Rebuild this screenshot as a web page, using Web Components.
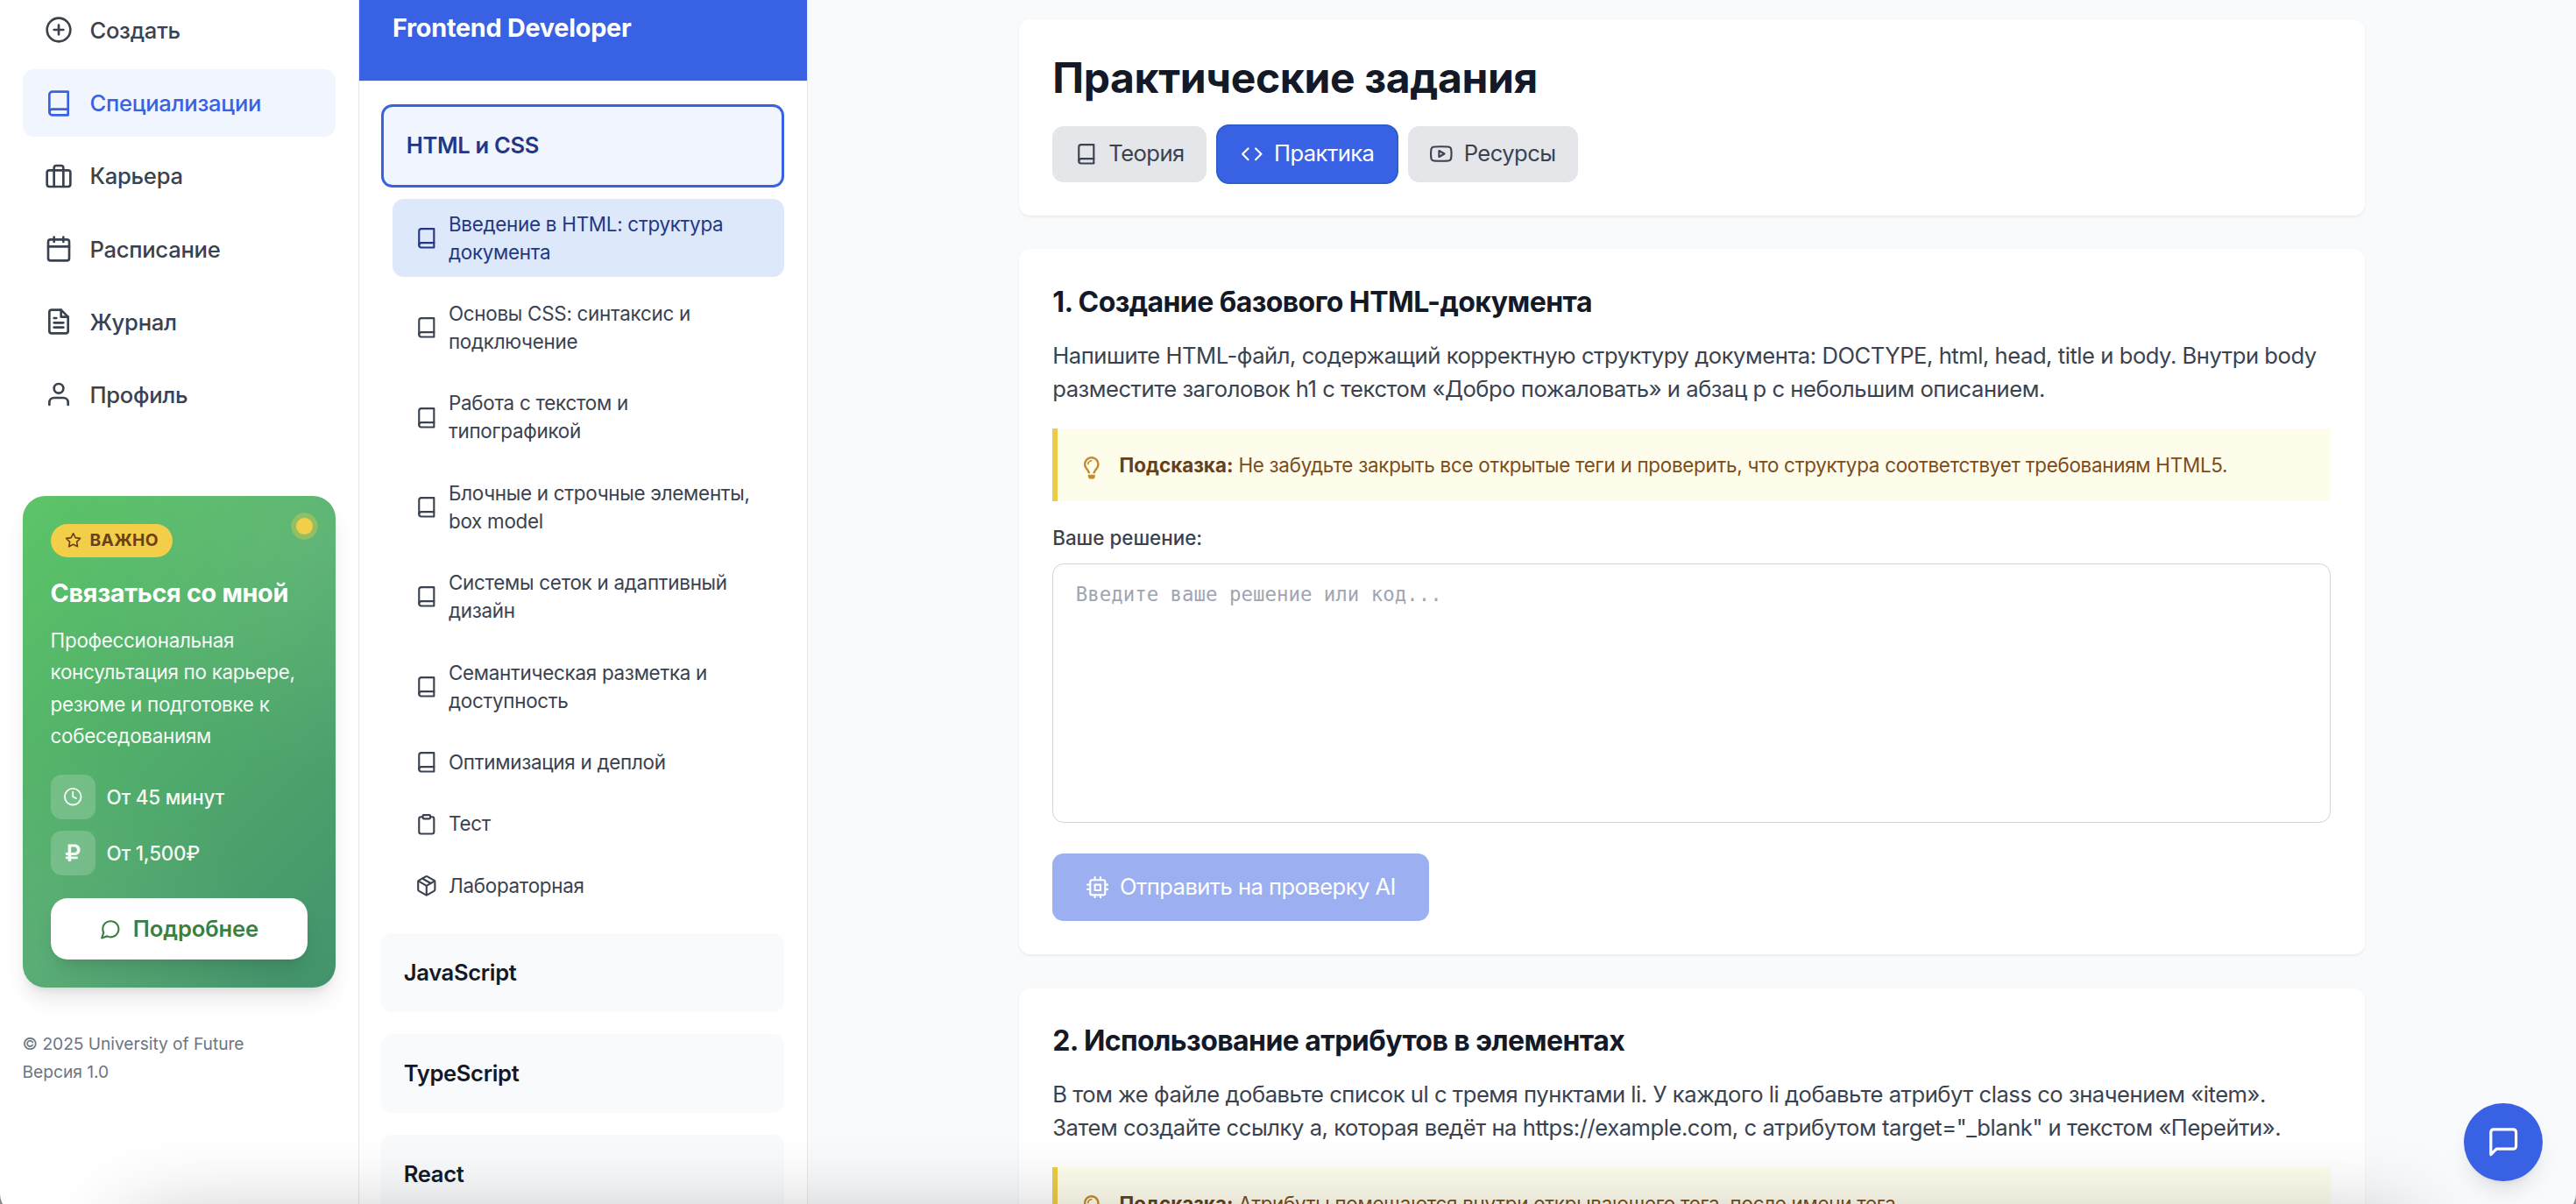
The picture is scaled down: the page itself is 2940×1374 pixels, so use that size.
<!DOCTYPE html>
<html lang="ru">
<head>
<meta charset="UTF-8">
<title>University of Future</title>
<style>
  html {
    font-size: 25.6px;
  }
  body {
    margin: 0;
    height: 100vh;
    overflow: hidden;
    display: flex;
    background: #f9fafc;
    font-family: Inter, "Liberation Sans", sans-serif;
    line-height: 1.5;
    color: #3a4250;
    --blue: #3862e3;
    --blue-soft: #f0f5fe;
    --navy: #243782;
    --ink: #131927;
    --text: #3a4250;
    --muted: #6d7482;
    --line: #e5e7eb;
  }
</style>
</head>
<body>
  <side-nav>
    <nav-link icon="plus-circle">Создать</nav-link>
    <nav-link icon="book" active>Специализации</nav-link>
    <nav-link icon="briefcase">Карьера</nav-link>
    <nav-link icon="calendar">Расписание</nav-link>
    <nav-link icon="file-text">Журнал</nav-link>
    <nav-link icon="user">Профиль</nav-link>
    <promo-card slot="promo"></promo-card>
    <span slot="footer">© 2025 University of Future</span>
    <span slot="footer">Версия 1.0</span>
  </side-nav>

  <course-panel heading="Frontend Developer">
    <course-chapter heading="HTML и CSS" open>
      <course-lesson icon="book" active>Введение в HTML: структура документа</course-lesson>
      <course-lesson icon="book">Основы CSS: синтаксис и подключение</course-lesson>
      <course-lesson icon="book">Работа с текстом и типографикой</course-lesson>
      <course-lesson icon="book">Блочные и строчные элементы, box model</course-lesson>
      <course-lesson icon="book">Системы сеток и адаптивный дизайн</course-lesson>
      <course-lesson icon="book">Семантическая разметка и доступность</course-lesson>
      <course-lesson icon="book">Оптимизация и деплой</course-lesson>
      <course-lesson icon="clipboard">Тест</course-lesson>
      <course-lesson icon="package">Лабораторная</course-lesson>
    </course-chapter>
    <course-chapter heading="JavaScript"></course-chapter>
    <course-chapter heading="TypeScript"></course-chapter>
    <course-chapter heading="React"></course-chapter>
  </course-panel>

  <practice-page heading="Практические задания">
    <page-tab slot="tabs" icon="book">Теория</page-tab>
    <page-tab slot="tabs" icon="code" active>Практика</page-tab>
    <page-tab slot="tabs" icon="youtube">Ресурсы</page-tab>

    <practice-task heading="1. Создание базового HTML-документа">
      Напишите HTML-файл, содержащий корректную структуру документа: DOCTYPE, html, head, title и body. Внутри body разместите заголовок h1 с текстом «Добро пожаловать» и абзац p с небольшим описанием.
      <span slot="hint">Не забудьте закрыть все открытые теги и проверить, что структура соответствует требованиям HTML5.</span>
    </practice-task>
    <practice-task heading="2. Использование атрибутов в элементах">
      В том же файле добавьте список ul с тремя пунктами li. У каждого li добавьте атрибут class со значением «item». Затем создайте ссылку a, которая ведёт на https://example.com, с атрибутом target="_blank" и текстом «Перейти».
      <span slot="hint">Атрибуты помещаются внутри открывающего тега, после имени тега.</span>
    </practice-task>
  </practice-page>

  <chat-button></chat-button>
  <window-edge></window-edge>

<script>
const ICONS = {
  "plus-circle": `<circle cx="12" cy="12" r="10"/><path d="M12 8v8M8 12h8"/>`,
  book: `<path d="M4 19.5A2.5 2.5 0 0 1 6.5 17H20"/><path d="M6.5 2H20v20H6.5A2.5 2.5 0 0 1 4 19.5v-15A2.5 2.5 0 0 1 6.5 2z"/>`,
  briefcase: `<rect x="2" y="7" width="20" height="14" rx="2"/><path d="M16 21V5a2 2 0 0 0-2-2h-4a2 2 0 0 0-2 2v16"/>`,
  calendar: `<rect x="3" y="4" width="18" height="18" rx="2"/><path d="M16 2v4M8 2v4M3 10h18"/>`,
  "file-text": `<path d="M14 2H6a2 2 0 0 0-2 2v16a2 2 0 0 0 2 2h12a2 2 0 0 0 2-2V8z"/><path d="M14 2v6h6M16 13H8M16 17H8M10 9H8"/>`,
  user: `<path d="M20 21v-2a4 4 0 0 0-4-4H8a4 4 0 0 0-4 4v2"/><circle cx="12" cy="7" r="4"/>`,
  star: `<path d="M12 2l3.09 6.26L22 9.27l-5 4.87 1.18 6.88L12 17.77l-6.18 3.25L7 14.14 2 9.27l6.91-1.01z"/>`,
  clock: `<circle cx="12" cy="12" r="10"/><path d="M12 6v6l4 2"/>`,
  "message-circle": `<path d="M21 11.5a8.38 8.38 0 0 1-.9 3.8 8.5 8.5 0 0 1-7.6 4.7 8.38 8.38 0 0 1-3.8-.9L3 21l1.9-5.7a8.38 8.38 0 0 1-.9-3.8 8.5 8.5 0 0 1 4.7-7.6 8.38 8.38 0 0 1 3.8-.9h.5a8.48 8.48 0 0 1 8 8z"/>`,
  "message-square": `<path d="M21 15a2 2 0 0 1-2 2H7l-4 4V5a2 2 0 0 1 2-2h14a2 2 0 0 1 2 2z"/>`,
  clipboard: `<path d="M16 4h2a2 2 0 0 1 2 2v14a2 2 0 0 1-2 2H6a2 2 0 0 1-2-2V6a2 2 0 0 1 2-2h2"/><rect x="8" y="2" width="8" height="4" rx="1"/>`,
  package: `<path d="M16.5 9.4l-9-5.19M21 16V8a2 2 0 0 0-1-1.73l-7-4a2 2 0 0 0-2 0l-7 4A2 2 0 0 0 3 8v8a2 2 0 0 0 1 1.73l7 4a2 2 0 0 0 2 0l7-4A2 2 0 0 0 21 16z"/><path d="M3.27 6.96L12 12.01l8.73-5.05M12 22.08V12"/>`,
  code: `<path d="M16 18l6-6-6-6M8 6l-6 6 6 6"/>`,
  youtube: `<path d="M22.54 6.42a2.78 2.78 0 0 0-1.94-2C18.88 4 12 4 12 4s-6.88 0-8.6.46a2.78 2.78 0 0 0-1.94 2A29 29 0 0 0 1 11.75a29 29 0 0 0 .46 5.33A2.78 2.78 0 0 0 3.4 19c1.72.46 8.6.46 8.6.46s6.88 0 8.6-.46a2.78 2.78 0 0 0 1.94-2 29 29 0 0 0 .46-5.25 29 29 0 0 0-.46-5.33z"/><path d="M9.75 15.02l5.75-3.27-5.75-3.27z"/>`,
  cpu: `<rect x="4" y="4" width="16" height="16" rx="2"/><path d="M9 9h6v6H9zM9 1v3M15 1v3M9 20v3M15 20v3M20 9h3M20 14h3M1 9h3M1 14h3"/>`,
};

// Filled icons keep their own viewBox
const SOLID_ICONS = {
  lightbulb: {
    box: "0 0 352 512",
    path: "M176 80c-52.94 0-96 43.06-96 96 0 8.84 7.16 16 16 16s16-7.16 16-16c0-35.3 28.72-64 64-64 8.84 0 16-7.16 16-16s-7.16-16-16-16zM96.06 459.17c0 3.15.93 6.22 2.68 8.84l24.51 36.84c2.97 4.46 7.97 7.14 13.32 7.14h78.85c5.36 0 10.36-2.68 13.32-7.14l24.51-36.84c1.74-2.62 2.67-5.7 2.68-8.84l.05-43.18H96.02l.04 43.18zM176 0C73.72 0 0 82.97 0 176c0 44.37 16.45 84.85 43.56 115.78 16.64 18.99 42.74 58.8 52.42 92.16v.06h48v-.12c-.01-4.77-.72-9.51-2.15-14.07-5.59-17.81-22.82-64.86-62.17-109.76-20.53-23.43-31.52-53.15-31.61-84.14-.2-73.64 59.67-128 127.95-128 70.58 0 128 57.42 128 128 0 30.97-11.24 60.85-31.65 84.14-39.11 44.61-56.42 91.47-62.1 109.46a47.507 47.507 0 0 0-2.22 14.3v.1h48v-.05c9.68-33.37 35.78-73.18 52.42-92.16C335.55 260.85 352 220.37 352 176 352 78.8 273.2 0 176 0z",
  },
  ruble: {
    box: "0 0 384 512",
    path: "M239.36 320C324.48 320 384 260.542 384 175.071S324.48 32 239.36 32H76c-6.627 0-12 5.373-12 12v206.632H12c-6.627 0-12 5.373-12 12V308c0 6.627 5.373 12 12 12h52v32H12c-6.627 0-12 5.373-12 12v40c0 6.627 5.373 12 12 12h52v52c0 6.627 5.373 12 12 12h58.56c6.627 0 12-5.373 12-12v-52H308c6.627 0 12-5.373 12-12v-40c0-6.627-5.373-12-12-12H146.56v-32h92.8zm-92.8-219.252h78.72c46.72 0 74.88 29.11 74.88 74.323 0 45.832-28.16 75.561-76.16 75.561h-77.44V100.748z",
  },
};

class BaseElement extends HTMLElement {
  constructor() {
    super();
    this.attachShadow({ mode: "open" });
  }

  connectedCallback() {
    this.shadowRoot.innerHTML = this.render();
  }
}

class UiIcon extends BaseElement {
  render() {
    const name = this.getAttribute("name");
    const solid = SOLID_ICONS[name];
    return `
      <style>
        :host { display: block; flex: none; width: 1rem; height: 1rem; }
        svg { display: block; width: 100%; height: 100%; }
      </style>
      ${
        solid
          ? `<svg viewBox="${solid.box}" fill="currentColor"><path d="${solid.path}"/></svg>`
          : `<svg viewBox="0 0 24 24" fill="none" stroke="currentColor" stroke-width="2" stroke-linecap="round" stroke-linejoin="round">${ICONS[name]}</svg>`
      }
    `;
  }
}

class SideNav extends BaseElement {
  render() {
    return `
      <style>
        :host {
          flex: none;
          box-sizing: border-box;
          width: 16rem;
          height: 100vh;
          overflow: hidden;
          padding: 0 1rem;
          border-right: 1px solid var(--line);
          background: #fff;
        }
        :host, nav, footer { display: flex; flex-direction: column; }
        /* the list is scrolled by a few pixels */
        nav { gap: 0.25rem; margin-top: -4px; }
        .promo { margin-top: 3rem; }
        footer {
          gap: 0.25rem;
          margin-top: 52px;
          font-size: 0.75rem;
          line-height: 1rem;
          letter-spacing: -0.002em;
          color: var(--muted);
        }
      </style>
      <nav><slot></slot></nav>
      <div class="promo"><slot name="promo"></slot></div>
      <footer><slot name="footer"></slot></footer>
    `;
  }
}

class NavLink extends BaseElement {
  render() {
    return `
      <style>
        :host {
          display: flex;
          align-items: center;
          gap: 0.75rem;
          height: 3rem;
          padding: 0 1rem;
          border-radius: 0.5rem;
          font-weight: 500;
          letter-spacing: -0.01em;
          white-space: nowrap;
        }
        :host([active]) { background: var(--blue-soft); color: var(--blue); }
        ui-icon { width: 1.25rem; height: 1.25rem; }
        span { padding-top: 1.5px; }
      </style>
      <ui-icon name="${this.getAttribute("icon")}"></ui-icon>
      <span><slot></slot></span>
    `;
  }
}

class PromoCard extends BaseElement {
  render() {
    return `
      <style>
        :host {
          display: flex;
          flex-direction: column;
          position: relative;
          padding: 1.25rem;
          border-radius: 1rem;
          color: #fff;
          background:
            radial-gradient(circle at 92% 8%, rgba(255, 255, 255, 0.08), transparent 45%),
            radial-gradient(circle at 8% 96%, rgba(255, 255, 255, 0.08), transparent 40%),
            linear-gradient(135deg, #5dc568, #43926d);
          box-shadow: 0 0.625rem 0.9375rem -0.1875rem rgba(0, 0, 0, 0.1), 0 0.25rem 0.375rem -0.25rem rgba(0, 0, 0, 0.1);
        }
        .dot {
          position: absolute;
          top: 1rem;
          right: 1rem;
          width: 0.75rem;
          height: 0.75rem;
          border-radius: 50%;
          background: #f2ce49;
          box-shadow: 0 0 0 0.22rem rgba(242, 206, 73, 0.35);
        }
        .badge {
          align-self: flex-start;
          display: flex;
          align-items: center;
          gap: 0.375rem;
          padding: 0.25rem 0.625rem;
          border-radius: 1rem;
          background: #f2ce49;
          color: #6a4119;
          font-size: 0.75rem;
          line-height: 1rem;
          font-weight: 700;
          letter-spacing: 0.02em;
        }
        .badge ui-icon { width: 0.75rem; height: 0.75rem; }
        h3 {
          margin: 0.75rem 0 0.5rem;
          font-size: 1.125rem;
          line-height: 1.75rem;
          font-weight: 700;
          letter-spacing: -0.011em;
          white-space: nowrap;
        }
        p {
          margin: 0 0 1rem;
          font-size: 0.875rem;
          line-height: 1.625;
          letter-spacing: -0.012em;
          opacity: 0.95;
        }
        .facts {
          display: flex;
          flex-direction: column;
          gap: 0.5rem;
          font-size: 0.875rem;
        }
        .fact { display: flex; align-items: center; gap: 0.5rem; opacity: 0.95; font-weight: 500; letter-spacing: -0.01em; }
        .tile {
          display: flex;
          align-items: center;
          justify-content: center;
          width: 2rem;
          height: 2rem;
          border-radius: 0.5rem;
          background: rgba(255, 255, 255, 0.2);
        }
        .tile ui-icon { width: 0.875rem; height: 0.875rem; }
        button {
          display: flex;
          align-items: center;
          justify-content: center;
          gap: 0.5rem;
          height: 2.75rem;
          margin-top: 1rem;
          padding: 1.5px 0 0;
          border: 0;
          border-radius: 0.75rem;
          background: #fff;
          color: #3a8042;
          font: inherit;
          font-weight: 600;
          letter-spacing: -0.005em;
          box-shadow: 0 0.625rem 0.9375rem -0.1875rem rgba(0, 0, 0, 0.1), 0 0.25rem 0.375rem -0.25rem rgba(0, 0, 0, 0.1);
        }
      </style>
      <div class="dot"></div>
      <div class="badge"><ui-icon name="star"></ui-icon>ВАЖНО</div>
      <h3>Связаться со мной</h3>
      <p>Профессиональная консультация по карьере, резюме и подготовке к собеседованиям</p>
      <div class="facts">
        <div class="fact"><div class="tile"><ui-icon name="clock"></ui-icon></div>От 45 минут</div>
        <div class="fact"><div class="tile"><ui-icon name="ruble"></ui-icon></div>От 1,500₽</div>
      </div>
      <button><ui-icon name="message-circle"></ui-icon>Подробнее</button>
    `;
  }
}

class CoursePanel extends BaseElement {
  render() {
    return `
      <style>
        :host {
          display: flex;
          flex-direction: column;
          flex: none;
          box-sizing: border-box;
          width: 20rem;
          height: 100vh;
          overflow: hidden;
          border-right: 1px solid var(--line);
          background: #fff;
        }
        header {
          flex: none;
          padding: 10px 1.5rem 37.6px;
          border-bottom: 1px solid var(--line);
          background: var(--blue);
          background-clip: padding-box;
          color: #fff;
        }
        h2 {
          margin: 0;
          font-size: 1.125rem;
          line-height: 1.75rem;
          font-weight: 700;
          letter-spacing: -0.009em;
        }
        .chapters {
          display: flex;
          flex-direction: column;
          gap: 1rem;
          padding: 1rem;
        }
      </style>
      <header><h2>${this.getAttribute("heading")}</h2></header>
      <div class="chapters"><slot></slot></div>
    `;
  }
}

class CourseChapter extends BaseElement {
  render() {
    return `
      <style>
        :host { display: block; flex: none; }
        .head {
          display: flex;
          align-items: center;
          height: 3.5rem;
          padding: 0 1rem;
          border-radius: 0.5rem;
          background: #f9fafc;
          color: var(--ink);
          font-weight: 600;
          letter-spacing: -0.014em;
        }
        :host([open]) .head {
          height: 89px;
          border: 3px solid var(--blue);
          background: var(--blue-soft);
          color: var(--navy);
        }
        .lessons { display: none; }
        :host([open]) .lessons {
          display: flex;
          flex-direction: column;
          gap: 0.5rem;
          margin: 0.5rem 0 0 0.5rem;
        }
      </style>
      <div class="head">${this.getAttribute("heading")}</div>
      <div class="lessons"><slot></slot></div>
    `;
  }
}

class CourseLesson extends BaseElement {
  render() {
    return `
      <style>
        :host {
          display: flex;
          align-items: center;
          gap: 0.5rem;
          padding: 0.5rem 1rem;
          border-radius: 0.5rem;
          font-size: 0.875rem;
          line-height: 1.25rem;
          letter-spacing: -0.012em;
        }
        :host([active]) { background: #dde8fb; color: var(--navy); }
      </style>
      <ui-icon name="${this.getAttribute("icon")}"></ui-icon>
      <span><slot></slot></span>
    `;
  }
}

class PracticePage extends BaseElement {
  render() {
    return `
      <style>
        :host {
          display: flex;
          flex: 1;
          justify-content: center;
          height: 100vh;
          overflow: hidden;
        }
        .column {
          display: flex;
          flex-direction: column;
          gap: 1.5rem;
          width: 60rem;
          padding-top: 22px;
        }
        header {
          padding: 1.5rem;
          border-radius: 0.5rem;
          background: #fff;
          box-shadow: 0 1.6px 3.2px rgba(0, 0, 0, 0.06);
        }
        h1 {
          margin: 0 0 1rem;
          color: var(--ink);
          font-size: 1.875rem;
          line-height: 2.25rem;
          font-weight: 700;
          letter-spacing: -0.0075em;
        }
        .tabs { display: flex; gap: 0.5rem; }
      </style>
      <div class="column">
        <header>
          <h1>${this.getAttribute("heading")}</h1>
          <div class="tabs"><slot name="tabs"></slot></div>
        </header>
        <slot></slot>
      </div>
    `;
  }
}

class PageTab extends BaseElement {
  render() {
    return `
      <style>
        :host {
          display: flex;
          align-items: center;
          gap: 0.5rem;
          padding: 0.5rem 1rem;
          border-radius: 0.5rem;
          background: #e5e6ea;
          letter-spacing: -0.022em;
        }
        :host([active]) {
          background: var(--blue);
          color: #fff;
          box-shadow: 0 0 0 2px #2c5fcc;
        }
      </style>
      <ui-icon name="${this.getAttribute("icon")}"></ui-icon>
      <span><slot></slot></span>
    `;
  }
}

class PracticeTask extends BaseElement {
  render() {
    return `
      <style>
        :host {
          display: block;
          padding: 1.5rem;
          border-radius: 0.5rem;
          background: #fff;
          box-shadow: 0 1.6px 3.2px rgba(0, 0, 0, 0.06);
        }
        h3 {
          margin: 0 0 0.75rem;
          color: var(--ink);
          font-size: 1.25rem;
          line-height: 1.75rem;
          font-weight: 700;
          letter-spacing: -0.018em;
        }
        p { margin: 0 0 1rem; letter-spacing: -0.018em; }
        .hint {
          display: flex;
          align-items: flex-start;
          gap: 0.75rem;
          padding: 1rem;
          border-left: 0.25rem solid #edcb48;
          background: #fefceb;
          color: #7b4d1c;
          font-size: 0.875rem;
          line-height: 1.25rem;
          letter-spacing: -0.012em;
        }
        .hint ui-icon { margin-top: 0.25rem; color: #c38b2c; }
        .hint strong { font-weight: 700; color: #673f18; letter-spacing: 0; }
        .label {
          margin: 1rem 0 0.5rem;
          font-size: 0.875rem;
          line-height: 1.25rem;
          font-weight: 500;
        }
        .answer {
          box-sizing: border-box;
          height: 296px;
          padding: 0.72rem 1rem;
          border: 1px solid #d2d4db;
          border-radius: 0.5rem;
          color: #a0a5b1;
          font-family: "DejaVu Sans Mono", "Liberation Mono", monospace;
          font-size: 0.875rem;
          line-height: 1.25rem;
        }
        button {
          display: flex;
          align-items: center;
          gap: 0.5rem;
          height: 3rem;
          margin-top: 35.4px;
          padding: 0 1.5rem;
          border: 0;
          border-radius: 0.5rem;
          background: #9baff1;
          color: #fff;
          font: inherit;
          letter-spacing: -0.022em;
        }
      </style>
      <h3>${this.getAttribute("heading")}</h3>
      <p><slot></slot></p>
      <div class="hint">
        <ui-icon name="lightbulb"></ui-icon>
        <div><strong>Подсказка:</strong> <slot name="hint"></slot></div>
      </div>
      <div class="label">Ваше решение:</div>
      <div class="answer" role="textbox">Введите ваше решение или код...</div>
      <button><ui-icon name="cpu"></ui-icon>Отправить на проверку AI</button>
    `;
  }
}

class ChatButton extends BaseElement {
  render() {
    return `
      <style>
        :host {
          position: fixed;
          right: 1.5rem;
          bottom: 1rem;
          display: flex;
          align-items: center;
          justify-content: center;
          width: 3.5rem;
          height: 3.5rem;
          border-radius: 50%;
          background: var(--blue);
          color: #fff;
          box-shadow: 0 0.625rem 0.9375rem -0.1875rem rgba(0, 0, 0, 0.1), 0 0.25rem 0.375rem -0.25rem rgba(0, 0, 0, 0.1);
        }
        ui-icon { width: 1.5rem; height: 1.5rem; }
      </style>
      <ui-icon name="message-square"></ui-icon>
    `;
  }
}

// Soft shade along the bottom and the rounded lower corners of the window
class WindowEdge extends BaseElement {
  render() {
    return `
      <style>
        :host {
          position: fixed;
          inset: 0;
          overflow: hidden;
          pointer-events: none;
        }
        .shade {
          position: absolute;
          left: 150px;
          right: 190px;
          top: calc(100% + 26px);
          height: 200px;
          box-shadow: 0 0 100px rgba(0, 0, 0, 0.3);
        }
        .corners {
          position: absolute;
          inset: -40px 0 -12px;
          border-radius: 24px;
          box-shadow: 0 0 0 24px #8a8b8d;
        }
      </style>
      <div class="shade"></div>
      <div class="corners"></div>
    `;
  }
}

customElements.define("ui-icon", UiIcon);
customElements.define("side-nav", SideNav);
customElements.define("nav-link", NavLink);
customElements.define("promo-card", PromoCard);
customElements.define("course-panel", CoursePanel);
customElements.define("course-chapter", CourseChapter);
customElements.define("course-lesson", CourseLesson);
customElements.define("practice-page", PracticePage);
customElements.define("page-tab", PageTab);
customElements.define("practice-task", PracticeTask);
customElements.define("chat-button", ChatButton);
customElements.define("window-edge", WindowEdge);
</script>
</body>
</html>
